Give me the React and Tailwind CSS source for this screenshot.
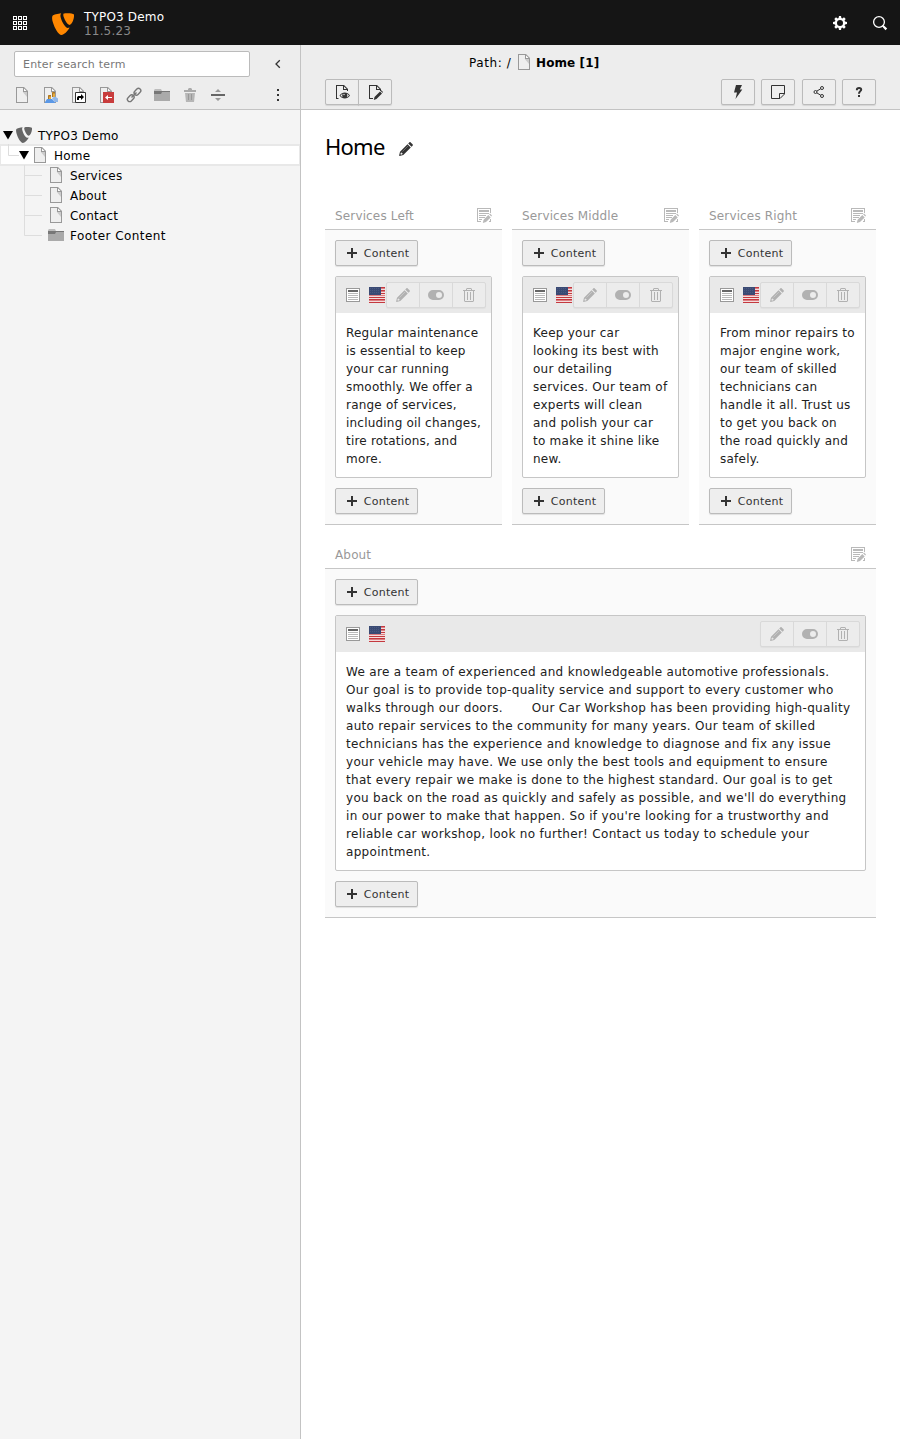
import React from "react";

const Svg = ({ children, className = "", size = 16, box = "0 0 16 16" }) => (
  <svg width={size} height={size} viewBox={box} fill="currentColor" className={"shrink-0 " + className}>
    {children}
  </svg>
);

const Logo = ({ size, className }) => (
  <Svg size={size} box="2.2 2.6 11.5 11.5" className={className}>
    <path d="M7 2.700C5.200 2.900 3 3.400 2.500 4 2.100 4.600 2.200 6 2.600 7.300 3.600 10.600 5.500 14 7.200 14.100c1.200 0 3.200-1.900 4.200-3.900-.4.200-.7.200-1 .2C8.700 10.200 6.800 6 6.600 4.200c0-.7.1-1.200.4-1.500z" />
    <path d="M8.300 2.900c.8-.3 4.700-.4 5.400.5.200 2.200-1 5-2.300 5.500C10 8.700 8.300 5.200 8.100 3.800c0-.4 0-.7.2-.9z" />
  </Svg>
);

const Page = ({ className, children }) => (
  <Svg className={className}>
    <path fill="#efefef" d="M2 0h8l4 4v12H2z" />
    <path fill="#fff" d="M10 1v4h4z" />
    <path fill="#ccc" d="M8 4l5 6V5H9z" />
    <path fill="#999" d="M2 0v16h12V4l-4-4zm1 1h6v4h4v10H3zm7 .4L12.600 4H10z" />
    {children}
  </Svg>
);

const Folder = () => (
  <Svg>
    <path fill="#aaa" d="M0 4h16v10H0z" />
    <path fill="#bdbdbd" d="M0 4V3l1-1h6l1 2z" />
    <path fill="#777" d="M0 4h16v1H8L7 7H0z" />
  </Svg>
);

const Pencil = ({ className }) => (
  <Svg className={className}>
    <path
      fillRule="evenodd"
      d="M9.500 3.200l3.300 3.300-7.500 7.500-3.700.9-.5-.5.9-3.700zM3 11.400l-.6 1.700.6.600 1.700-.6-.3-.8-.7-.1-.1-.7z"
    />
    <path d="M10.200 2.500l1.100-1.100c.4-.4 1-.4 1.400 0l1.900 1.900c.4.400.4 1 0 1.400l-1.100 1.100z" />
    <path fill="none" stroke="#fff" strokeOpacity=".4" strokeWidth=".7" d="M4.500 10.500L10 5" />
  </Svg>
);

const Plus = () => (
  <Svg>
    <path d="M7 3h2v4h4v2H9v4H7V9H3V7h4z" />
  </Svg>
);

const ListEdit = () => (
  <Svg className="text-[#b9b9b9]">
    <path d="M1 1h14v5h-1V2H2v12h3v1H1z" />
    <path d="M3 3h10v2H3zM3 6h10v1H3zM3 8h7v1H3zM3 10h6v1H3zM3 12h3v1H3z" />
    <path d="M12.300 8l2.400 2.400-4.700 4.700-3.200.9.800-3.300zM13.100 7.300l.9-.8 2 2-.8.900z" />
    <path d="M14 12h1v3h-2v-1h1z" />
  </Svg>
);

const TextElement = () => (
  <Svg>
    <path fill="#fff" d="M1 1h14v14H1z" />
    <path fill="#999" fillRule="evenodd" d="M1 1v14h14V1zm1 1h12v12H2z" />
    <path fill="#666" d="M3 3h10v2H3z" />
    <path fill="#b9b9b9" d="M3 6h10v1H3zM3 8h10v1H3zM3 10h10v1H3zM3 12h10v1H3z" />
  </Svg>
);

const Flag = () => (
  <Svg>
    <path fill="#f4dcdc" d="M0 0h16v16H0z" />
    <path fill="#c4393f" d="M12 0h4v1h-4zM12 3h4v1h-4zM12 6h4v1h-4zM0 10h16v1H0zM0 12h16v1H0zM0 15h16v1H0z" />
    <path fill="#dc7d81" d="M12 1h4v1h-4zM12 4h4v1h-4zM0 8h16v1H0zM0 13h16v1H0z" />
    <path fill="#3a4a74" d="M0 0h12v8H0z" />
    <path stroke="#5b688b" strokeWidth=".5" strokeDasharray="1 1" d="M1 1.500h10M1 3.500h10M1 5.500h10" />
  </Svg>
);

const Toggle = () => (
  <Svg>
    <path fillRule="evenodd" d="M5 3h6a5 5 0 0 1 0 10H5A5 5 0 0 1 5 3zm6 2a3 3 0 1 0 0 6 3 3 0 0 0 0-6z" />
  </Svg>
);

const TrashOutline = () => (
  <Svg>
    <path fillRule="evenodd" d="M6 1h4l1 1v1h3v1h-1v10l-1 1H4l-1-1V4H2V3h3V2zm0 1v1h4V2zM4 4v10h8V4z" />
    <path d="M6 5h1v8H6zM9 5h1v8H9z" />
  </Svg>
);

const GhostPage = () => (
  <path fill="#333" fillRule="evenodd" d="M2 1h8l4 4v2h-1V6H9V2H3v12h3v1H2zm8 1.400V5h2.600z" />
);

const btn = "flex items-center justify-center border border-[#bbb] bg-[#eee] text-[#333] shadow-[0_1px_1px_rgba(0,0,0,0.1)]";

const ContentButton = () => (
  <button className={btn + " h-[26px] w-[83px] gap-1 rounded-[2px] text-[11px]"}>
    <Plus />
    <span className="pt-[2px] tracking-[0.24px]">Content</span>
  </button>
);

const ToolGroup = () => (
  <div className="flex h-[26px] w-[100px] divide-x divide-[#d9d9d9] rounded-[2px] border border-[#d9d9d9] bg-[#ececec] text-[#b1b1b1] shadow-[0_1px_1px_rgba(0,0,0,0.04)]">
    {[Pencil, Toggle, TrashOutline].map((Icon, i) => (
      <span key={i} className="flex flex-1 items-center justify-center">
        <Icon />
      </span>
    ))}
  </div>
);

const Column = ({ title, text, spacing }) => (
  <section className="min-w-0 flex-1">
    <header className="flex h-[30px] items-center justify-between border-b border-[#c6c6c6] px-[10px] text-[#999]">
      <span className="pt-[3px] tracking-[0.15px]">{title}</span>
      <ListEdit />
    </header>
    <div className="flex flex-col items-start gap-[10px] border-b border-[#c6c6c6] bg-[#fafafa] p-[10px]">
      <ContentButton />
      <article className="w-full rounded-[2px] border border-[#c6c6c6] bg-white">
        <div className="flex h-9 items-center bg-[#e9e9e9] pr-[5px] pl-[9px]">
          <TextElement />
          <span className="ml-2">
            <Flag />
          </span>
          <span className="ml-auto">
            <ToolGroup />
          </span>
        </div>
        <p className={"px-[10px] pt-[11px] pb-[9px] leading-[18px] whitespace-pre-wrap text-[#212121] " + spacing}>{text}</p>
      </article>
      <ContentButton />
    </div>
  </section>
);

const TreeRow = ({ label, children, className, spacing = "tracking-[0.22px]" }) => (
  <li className={"flex h-5 items-center text-black " + className}>
    {children}
    <span className={"pt-[2px] pl-[6px] " + spacing}>{label}</span>
  </li>
);

const Caret = () => (
  <Svg size={10} box="0 0 10 10" className="text-black">
    <path d="M0 1h10L5 9.500z" />
  </Svg>
);

const Branch = ({ last }) => (
  <svg width="24" height="20" className="shrink-0" fill="none" stroke="#ddd">
    <path d={last ? "M.5 0v10.500H18" : "M.5 0v20M0 10.500H18"} />
  </svg>
);

const columns = [
  ["Services Left", "Regular maintenance is essential to keep your car running smoothly. We offer a range of services, including oil changes, tire rotations, and more.", "tracking-[0.2px]"],
  ["Services Middle", "Keep your car looking its best with our detailing services. Our team of experts will clean and polish your car to make it shine like new.", "tracking-[0.25px]"],
  ["Services Right", "From minor repairs to major engine work, our team of skilled technicians can handle it all. Trust us to get you back on the road quickly and safely.", "tracking-[0.24px]"],
];

const about =
  "We are a team of experienced and knowledgeable automotive professionals. Our goal is to provide top-quality service and support to every customer who walks through our doors. \u00a0 \u00a0 \u00a0 Our Car Workshop has been providing high-quality auto repair services to the community for many years. Our team of skilled technicians has the experience and knowledge to diagnose and fix any issue your vehicle may have. We use only the best tools and equipment to ensure that every repair we make is done to the highest standard. Our goal is to get you back on the road as quickly and safely as possible, and we'll do everything in our power to make that happen. So if you're looking for a trustworthy and reliable car workshop, look no further! Contact us today to schedule your appointment.";

function TopBar() {
  return (
    <header className="flex h-[45px] items-center bg-[#151515] text-white">
      <Svg className="ml-3">
        {[1, 6, 11].map((y) =>
          [1, 6, 11].map((x) => (
            <rect key={x + "-" + y} x={x + 0.5} y={y + 0.5} width="3" height="3" fill="none" stroke="#fff" />
          ))
        )}
      </Svg>
      <Logo size={22} className="mt-[3px] ml-6 text-[#ff8700]" />
      <div className="ml-[10px] pt-[3px] leading-[14px] tracking-[0.18px]">
        <div>TYPO3 Demo</div>
        <div className="text-[#8a8a8a]">11.5.23</div>
      </div>
      <Svg className="ml-auto">
        <path
          fillRule="evenodd"
          d="M7 1h2l.4 2 1 .4L12 2.300 13.700 4l-1.100 1.600.4 1 2 .4v2l-2 .4-.4 1 1.100 1.600L12 13.700l-1.600-1.100-1 .4L9 15H7l-.4-2-1-.4L4 13.700 2.300 12l1.100-1.600-.4-1L1 9V7l2-.4.4-1L2.300 4 4 2.300l1.600 1.100 1-.4zm1 4a3 3 0 1 0 0 6 3 3 0 0 0 0-6z"
        />
      </Svg>
      <Svg className="mr-3 ml-6">
        <circle cx="7" cy="7" r="5.400" fill="none" stroke="#fff" strokeWidth="1.300" />
        <path d="M10 11l1-1 1.500 1 2.700 2.500-1.700 1.700-2.500-2.700z" />
      </Svg>
    </header>
  );
}

function Sidebar() {
  return (
    <aside className="w-[301px] shrink-0 border-r border-[#c3c3c3] bg-[#f4f4f4]">
      <div className="h-[65px] border-b border-[#c3c3c3] bg-[#ededed] pt-[6px] pl-[14px]">
        <div className="flex items-center">
          <div className="flex h-[26px] w-[236px] items-center rounded-[2px] border border-[#bbb] bg-white pt-[2px] pl-2 text-[11px] tracking-[0.2px] text-[#777]">
            Enter search term
          </div>
          <Svg className="ml-5 text-[#333]">
            <path fill="none" stroke="currentColor" strokeWidth="1.300" d="M9.800 4.200L6 8l3.800 3.800" />
          </Svg>
        </div>
        <div className="mt-[10px] flex items-center gap-3">
          <Page />
          <Page>
            <path fill="#e8ab3a" d="M10 5h3v5h-3zM6 8h3v5H6z" />
            <path fill="#5b98e6" d="M3 15l2-3h5l3 3v1H3z" />
            <path fill="#8fb6e8" d="M10 11l3-1.500 3 2V15h-3z" />
            <path fill="#a8762a" d="M10 6l1-1h2v1.500h-2V10h-1zM6 9l1-1h2v1.500H7V12H6z" />
          </Page>
          <Page>
            <path fill="#fff" stroke="#333" d="M5.500 5.500h10v10h-10z" />
            <path fill="#000" d="M7 13V10.500L8 9h3V7l3 3-3 3v-2H9v2z" />
          </Page>
          <Page>
            <path fill="#c83c3c" d="M5 5h11v11H5z" />
            <path fill="#fff" d="M7 10.500L10 8v2h4v1h-4v2z" />
          </Page>
          <Svg>
            <g fill="none" stroke="#777" strokeWidth="1.400">
              <rect x="7.700" y="2.500" width="7.500" height="4.600" rx="2.300" transform="rotate(-45 11.400 4.800)" />
              <rect x="1" y="9" width="7.500" height="4.600" rx="2.300" transform="rotate(-45 4.700 11.300)" />
              <path d="M5.500 10.500l5-5" />
            </g>
          </Svg>
          <Folder />
          <Svg>
            <path fill="#aaa" d="M2 3h4V2l1-1h2l1 1v1h4v2H2z" />
            <path fill="#b6b6b6" d="M3 6h10l-1 9H4z" />
            <path fill="#999" d="M6 7h1v6H6zM9 7h1v6H9z" />
          </Svg>
          <Svg className="text-[#666]">
            <path d="M1 7h14v2H1z" />
            <path fill="#999" d="M8 2l3 3H5zM8 14l3-3H5z" />
          </Svg>
          <Svg className="ml-8 text-[#333]">
            <path d="M7 2h2v2H7zM7 7h2v2H7zM7 12h2v2H7z" />
          </Svg>
        </div>
      </div>
      <ul className="pt-[15px]">
        <TreeRow label="TYPO3 Demo" className="pl-[3px]">
          <Caret />
          <Logo size={16} className="ml-[3px] text-[#666]" />
        </TreeRow>
        <li className="-mt-px -mb-px flex h-[22px] items-center border-x border-y-2 border-[#e8e8e8] bg-white pl-[7px] text-black">
          <svg width="11" height="22" fill="none" stroke="#ddd">
            <path d="M.5 0v11.500H11" />
          </svg>
          <Caret />
          <Page className="ml-[3px]" />
          <span className="pt-[2px] pl-[6px] tracking-[0.2px]">Home</span>
        </li>
        {["Services", "About", "Contact"].map((t) => (
          <TreeRow key={t} label={t} className="pl-6">
            <Branch />
            <Page />
          </TreeRow>
        ))}
        <TreeRow label="Footer Content" className="pl-6" spacing="tracking-[0.45px]">
          <Branch last />
          <Folder />
        </TreeRow>
      </ul>
    </aside>
  );
}

function DocHeader() {
  const single = btn + " h-[26px] w-[34px] rounded-[2px]";
  return (
    <div className="h-[65px] border-b border-[#c3c3c3] bg-[#ededed] pr-6 pl-6">
      <div className="flex h-[34px] items-center pl-36 text-black">
        <span className="w-[43px] pt-px tracking-[0.6px]">Path: /</span>
        <Page className="ml-1" />
        <b className="ml-1 pt-px tracking-[0.1px]">Home [1]</b>
      </div>
      <div className="flex items-center">
        <button className={btn + " h-[26px] w-[34px] rounded-l-[2px]"}>
          <Svg>
            <GhostPage />
            <path fill="#eee" d="M4.500 8h12v7h-12z" />
            <path d="M5.500 11.500C8 7.500 13.500 7.500 16 11.500c-2.500 4-8 4-10.500 0z" />
            <path fill="#eee" d="M6.500 11.500c.6-.9 1.300-1.500 2.200-1.800-.7 1.200-.7 2.600.1 3.600-1-.3-1.700-.9-2.300-1.800zM15 11.500c-.6-.9-1.300-1.500-2.200-1.800.7 1.200.7 2.600-.1 3.600 1-.3 1.700-.9 2.300-1.800z" />
            <circle cx="10" cy="10.500" r=".7" fill="#eee" />
          </Svg>
        </button>
        <button className={btn + " -ml-px h-[26px] w-[34px] rounded-r-[2px]"}>
          <Svg>
            <GhostPage />
            <path d="M13 7.500l2 2-5.500 5.500-2.700 1 .7-3zM13.600 6.900l.7-.7 1.900 1.900-.7.700z" />
          </Svg>
        </button>
        <button className={single + " ml-auto"}>
          <Svg>
            <path d="M6 1h6L9.800 5.500H12.300L5.500 15 7 8.500H4z" />
          </Svg>
        </button>
        <button className={single + " ml-[6px]"}>
          <Svg>
            <path fill="none" stroke="currentColor" d="M1.500 1.500h13V10L10 14.500H1.500zM9.500 14V9.500H14" />
          </Svg>
        </button>
        <button className={single + " ml-[7px]"}>
          <Svg>
            <g fill="none" stroke="currentColor">
              <circle cx="4.500" cy="8" r="1.500" />
              <circle cx="11" cy="4" r="1.500" />
              <circle cx="11" cy="12" r="1.500" />
              <path d="M5.700 7.200l4-2.400M5.700 8.800l4 2.400" />
            </g>
          </Svg>
        </button>
        <button className={single + " ml-[6px]"}>
          <Svg>
            <path fill="none" stroke="currentColor" strokeWidth="2" d="M5.900 6.200V5.500c0-2 4.300-2 4.300 0C10.200 7.200 8 7.200 8 9.800" />
            <path d="M7 11h2v2H7z" />
          </Svg>
        </button>
      </div>
    </div>
  );
}

export default function App() {
  return (
    <div className="flex h-[1439px] w-[900px] flex-col bg-white font-['Verdana','DejaVu_Sans',sans-serif] text-[12px]">
      <TopBar />
      <div className="flex flex-1">
        <Sidebar />
        <main className="min-w-0 flex-1">
          <DocHeader />
          <div className="px-6">
            <div className="flex h-[90px] items-start pt-5 text-black">
              <h1 className="w-[60px] font-['Noto_Sans',sans-serif] text-[22px] leading-[32px] tracking-[-0.75px]">Home</h1>
              <Pencil className="mt-[11px] ml-[13px] text-[#333]" />
            </div>
            <div className="flex gap-[10px]">
              {columns.map(([title, text, spacing]) => (
                <Column key={title} title={title} text={text} spacing={spacing} />
              ))}
            </div>
            <div className="mt-[14px] flex">
              <Column title="About" text={about} spacing="tracking-[0.31px]" />
            </div>
          </div>
        </main>
      </div>
    </div>
  );
}
